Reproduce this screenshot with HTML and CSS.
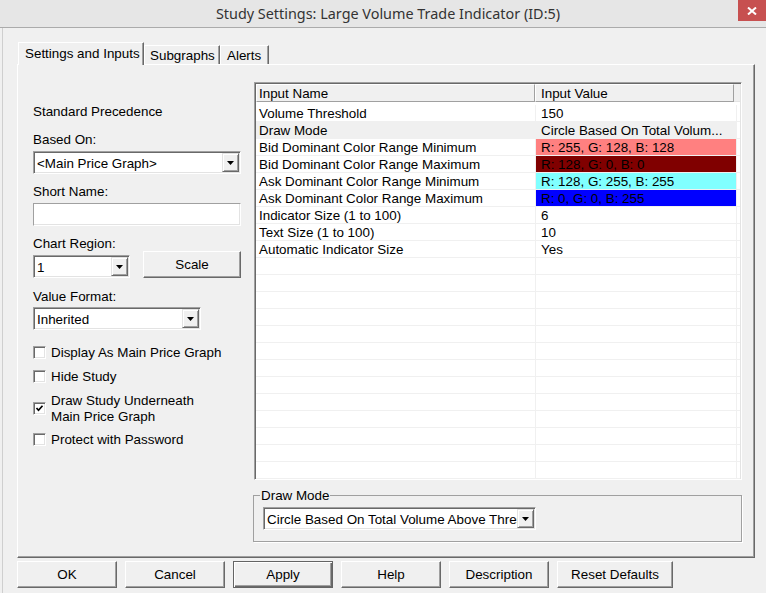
FILE: index.html
```html
<!DOCTYPE html>
<html>
<head>
    <title>Study Settings</title>
    <link rel="stylesheet" href="styles.css">
</head>
<body>
<div class="window">
    <div class="titlebar">
        <span class="title">Study Settings: Large Volume Trade Indicator (ID:5)</span>
        <span class="close">
            <svg width="10" height="8" viewBox="0 0 10 8"><path d="M1 0.5 L9 7.5 M9 0.5 L1 7.5" stroke="#fff" stroke-width="2"/></svg>
        </span>
    </div>

    <div class="client">
        <div class="tabs">
            <div class="tab active">Settings and Inputs</div>
            <div class="tab t-sub">Subgraphs</div>
            <div class="tab t-alerts">Alerts</div>
        </div>

        <div class="page">
            <!-- left settings column -->
            <div class="left">
                <div class="lbl std">Standard Precedence</div>

                <div class="lbl gap10">Based On:</div>
                <div class="combo w-full gap2">
                    <span class="combo-text">&lt;Main Price Graph&gt;</span>
                    <span class="combo-btn"><svg width="7" height="4" viewBox="0 0 7 4"><polygon points="0,0 7,0 3.5,4" fill="#000"/></svg></span>
                </div>

                <div class="lbl gap9">Short Name:</div>
                <div class="edit w-full gap2"></div>

                <div class="lbl gap9">Chart Region:</div>
                <div class="region-row">
                    <div class="combo w-region">
                        <span class="combo-text">1</span>
                        <span class="combo-btn"><svg width="7" height="4" viewBox="0 0 7 4"><polygon points="0,0 7,0 3.5,4" fill="#000"/></svg></span>
                    </div>
                    <div class="btn scale">Scale</div>
                </div>

                <div class="lbl gap10">Value Format:</div>
                <div class="combo w-format gap1">
                    <span class="combo-text">Inherited</span>
                    <span class="combo-btn"><svg width="7" height="4" viewBox="0 0 7 4"><polygon points="0,0 7,0 3.5,4" fill="#000"/></svg></span>
                </div>

                <label class="chk gap14"><span class="box"></span><span class="chk-text">Display As Main Price Graph</span></label>
                <label class="chk gap7"><span class="box"></span><span class="chk-text">Hide Study</span></label>
                <label class="chk gap7"><span class="box"><svg width="9" height="9" viewBox="0 0 9 9"><polyline points="1.5,4 3.5,6.2 7.5,1.8" fill="none" stroke="#000" stroke-width="1.7"/></svg></span><span class="chk-text">Draw Study Underneath<br>Main Price Graph</span></label>
                <label class="chk gap6"><span class="box"></span><span class="chk-text">Protect with Password</span></label>
            </div>

            <!-- inputs list and draw mode -->
            <div class="right">
                <div class="grid">
                    <div class="grid-head">
                        <div class="hcell hname">Input Name</div>
                        <div class="hcell hvalue">Input Value</div>
                        <div class="hfill"></div>
                    </div>
                    <div class="rows">
                        <div class="row"><div class="name">Volume Threshold</div><div class="value">150</div></div>
                        <div class="row sel"><div class="name">Draw Mode</div><div class="value">Circle Based On Total Volum...</div></div>
                        <div class="row"><div class="name">Bid Dominant Color Range Minimum</div><div class="value c-pink">R: 255, G: 128, B: 128</div></div>
                        <div class="row"><div class="name">Bid Dominant Color Range Maximum</div><div class="value c-maroon">R: 128, G: 0, B: 0</div></div>
                        <div class="row"><div class="name">Ask Dominant Color Range Minimum</div><div class="value c-cyan">R: 128, G: 255, B: 255</div></div>
                        <div class="row"><div class="name">Ask Dominant Color Range Maximum</div><div class="value c-blue">R: 0, G: 0, B: 255</div></div>
                        <div class="row"><div class="name">Indicator Size (1 to 100)</div><div class="value">6</div></div>
                        <div class="row"><div class="name">Text Size (1 to 100)</div><div class="value">10</div></div>
                        <div class="row"><div class="name">Automatic Indicator Size</div><div class="value">Yes</div></div>
                        <div class="row"><div class="name"></div><div class="value"></div></div>
                        <div class="row"><div class="name"></div><div class="value"></div></div>
                        <div class="row"><div class="name"></div><div class="value"></div></div>
                        <div class="row"><div class="name"></div><div class="value"></div></div>
                        <div class="row"><div class="name"></div><div class="value"></div></div>
                        <div class="row"><div class="name"></div><div class="value"></div></div>
                        <div class="row"><div class="name"></div><div class="value"></div></div>
                        <div class="row"><div class="name"></div><div class="value"></div></div>
                        <div class="row"><div class="name"></div><div class="value"></div></div>
                        <div class="row"><div class="name"></div><div class="value"></div></div>
                        <div class="row"><div class="name"></div><div class="value"></div></div>
                        <div class="row"><div class="name"></div><div class="value"></div></div>
                        <div class="row"><div class="name"></div><div class="value"></div></div>
                    </div>
                </div>

                <fieldset class="group">
                    <legend>Draw Mode</legend>
                    <div class="combo w-mode">
                        <span class="combo-text">Circle Based On Total Volume Above Threshold</span>
                        <span class="combo-btn"><svg width="7" height="4" viewBox="0 0 7 4"><polygon points="0,0 7,0 3.5,4" fill="#000"/></svg></span>
                    </div>
                </fieldset>
            </div>
        </div>

        <div class="buttons">
            <div class="btn">OK</div>
            <div class="btn">Cancel</div>
            <div class="btn default">Apply</div>
            <div class="btn">Help</div>
            <div class="btn">Description</div>
            <div class="btn wide">Reset Defaults</div>
        </div>
    </div>
</div>
</body>
</html>
```

FILE: styles.css
```css
/* Resetting defaults */
* {
    box-sizing: border-box;
}

body {
    margin: 0;
    background-color: #f0f0f0;
    font-family: "Liberation Sans", Arial, sans-serif;
    font-size: 13.4px;
    color: #000;
}

.window {
    width: 766px;
    height: 593px;
    overflow: hidden;
}

/* Title bar */
.titlebar {
    position: relative;
    height: 28px;
    padding-left: 10px;
    background-color: #e6e6e6;
    border-bottom: 1px solid #ababab;
    display: flex;
    justify-content: center;
    align-items: center;
}

.title {
    font-family: "Noto Sans", sans-serif;
    font-size: 14.4px;
    color: #333;
    margin-top: -1px;
}

.close {
    position: absolute;
    top: 0;
    right: 0;
    width: 28px;
    height: 21px;
    background-color: #c75050;
    display: flex;
    justify-content: center;
    align-items: center;
}

/* Client area */
.client {
    margin-left: 2px;
    border-left: 1px solid #cfcfcf;
    padding: 14px 0 0 14px;
    height: 565px;
}

.tabs {
    display: flex;
    align-items: flex-end;
    height: 22px;
    margin-left: 1px;
}

.tab {
    height: 19px;
    line-height: 16px;
    padding: 2px 0 0 5px;
    border-top: 1px solid #fff;
    border-left: 1px solid #fff;
    border-right: 1px solid #696969;
    box-shadow: inset -1px 0 0 #a0a0a0;
    background-color: #f0f0f0;
}

.tab.active {
    position: relative;
    z-index: 1;
    width: 126px;
    height: 23px;
    margin-bottom: -1px;
    padding: 3px 0 0 6px;
}

.t-sub {
    width: 76px;
}

.t-alerts {
    width: 49px;
    padding-left: 6px;
}

.page {
    display: flex;
    gap: 13px;
    width: 738px;
    height: 494px;
    padding: 17px 12px 0 15px;
    border-top: 1px solid #fff;
    border-left: 1px solid #fff;
    border-right: 1px solid #696969;
    border-bottom: 1px solid #696969;
    box-shadow: inset -1px -1px 0 #a0a0a0;
}

/* Left column */
.left {
    width: 208px;
    display: flex;
    flex-direction: column;
    align-items: flex-start;
}

.lbl {
    line-height: 18px;
}

.std { margin-top: 21px; }
.gap1 { margin-top: 1px; }
.gap2 { margin-top: 2px; }
.gap6 { margin-top: 6px; }
.gap7 { margin-top: 7px; }
.gap9 { margin-top: 9px; }
.gap10 { margin-top: 10px; }
.gap14 { margin-top: 14px; }

.combo, .edit {
    display: flex;
    height: 23px;
    padding: 1px;
    background-color: #fff;
    border: 1px solid;
    border-color: #a0a0a0 #fff #fff #a0a0a0;
    box-shadow: inset 1px 1px 0 #696969, inset -1px -1px 0 #e3e3e3;
}

.edit {
    box-shadow: inset -1px -1px 0 #e3e3e3;
}

.w-full { width: 208px; }
.w-region { width: 97px; }
.w-format { width: 168px; }
.w-mode { width: 273px; }

.combo-text {
    flex: 1;
    padding-left: 2px;
    line-height: 21px;
    white-space: nowrap;
    overflow: hidden;
}

.combo-btn {
    width: 17px;
    display: flex;
    justify-content: center;
    align-items: center;
    background-color: #f0f0f0;
    border: 1px solid;
    border-color: #e3e3e3 #696969 #696969 #e3e3e3;
    box-shadow: inset 1px 1px 0 #fff, inset -1px -1px 0 #a0a0a0;
}

.region-row {
    display: flex;
    align-items: flex-end;
    gap: 13px;
    height: 27px;
    margin-top: -2px;
}

.btn {
    height: 27px;
    width: 100px;
    display: flex;
    justify-content: center;
    align-items: center;
    background-color: #f0f0f0;
    border: 1px solid;
    border-color: #fff #696969 #696969 #fff;
    box-shadow: inset -1px -1px 0 #a0a0a0;
}

.btn.scale {
    width: 98px;
}

.chk {
    display: flex;
    align-items: center;
    gap: 5px;
}

.chk-text {
    line-height: 16px;
    padding-top: 1px;
}

.box {
    width: 13px;
    height: 13px;
    flex: none;
    padding: 1px;
    background-color: #fff;
    border: 1px solid;
    border-color: #a0a0a0 #fff #fff #a0a0a0;
    box-shadow: inset 1px 1px 0 #696969, inset -1px -1px 0 #e3e3e3;
}

.box svg {
    display: block;
}

/* Right column */
.right {
    width: 488px;
    display: flex;
    flex-direction: column;
}

.grid {
    height: 398px;
    overflow: hidden;
    background-color: #fff;
    border: 1px solid;
    border-color: #a0a0a0 #fff #fff #a0a0a0;
    padding: 1px;
    box-shadow: inset 1px 1px 0 #696969, inset -1px -1px 0 #e3e3e3;
}

.grid-head {
    display: flex;
    height: 18px;
    line-height: 18px;
}

.hcell {
    background-color: #f0f0f0;
    border-top: 1px solid #fff;
    border-left: 1px solid #fff;
    border-right: 1px solid #a0a0a0;
    border-bottom: 1px solid #a0a0a0;
    padding-left: 2px;
}

.hname { width: 279px; }
.hvalue { width: 199px; padding-left: 5px; }

.hfill {
    flex: 1;
    background-color: #f0f0f0;
    border-bottom: 1px solid #e3e3e3;
}

.rows {
    margin-top: 3px;
}

.row {
    display: flex;
    height: 17px;
    line-height: 18px;
    border-bottom: 1px solid #f0f0f0;
}

.row .name {
    width: 280px;
    padding-left: 3px;
    border-right: 1px solid #f0f0f0;
    white-space: nowrap;
}

.row .value {
    width: 201px;
    padding-left: 5px;
    border-right: 1px solid #f0f0f0;
    white-space: nowrap;
    overflow: hidden;
}

.row.sel .name, .row.sel .value {
    background-color: #f0f0f0;
}

.c-pink { background-color: #ff8080; }
.c-maroon { background-color: #800000; }
.c-cyan { background-color: #80ffff; }
.c-blue { background-color: #0000ff; }

.group {
    margin: 7px 0 0 -1px;
    width: 489px;
    height: 55px;
    padding: 3px 9px 0 9px;
    border: 1px solid #a0a0a0;
    box-shadow: 1px 1px 0 #fff;
}

.group legend {
    padding: 1px 1px 0;
    margin-left: -3px;
    line-height: 16px;
}

/* Dialog buttons */
.buttons {
    display: flex;
    gap: 8px;
    margin-top: 3px;
}

.btn.default {
    border-color: #646464;
    box-shadow: inset 1px 1px 0 #fff, inset -1px -1px 0 #696969, inset -2px -2px 0 #a0a0a0;
}

.btn.wide {
    width: 116px;
}
```
